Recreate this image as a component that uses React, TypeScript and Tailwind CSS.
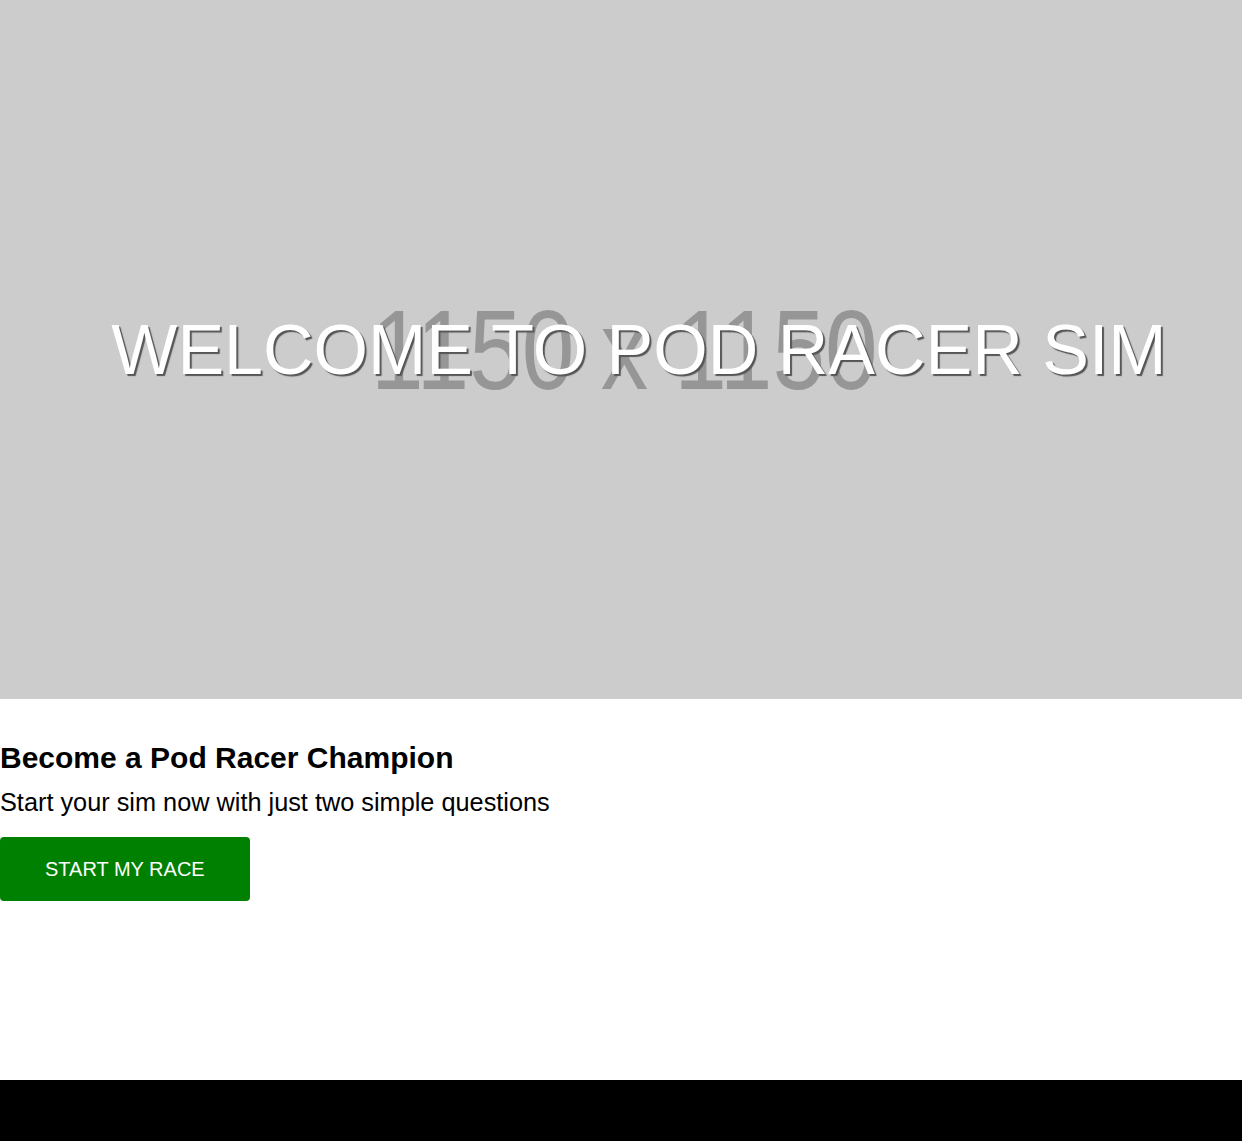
import React from "react";

export default function App() {
  return (
    <div className="w-full bg-white font-['Liberation_Sans',Arial,sans-serif] text-black">
      <section className="relative flex h-[699px] w-full items-center justify-center overflow-hidden bg-[#cccccc]">
        <div className="absolute inset-0 flex items-center justify-center pl-[6px]">
          <span className="scale-x-[0.83] whitespace-nowrap text-[114px] leading-[131px] text-[#969696]">
            1150 x 1150
          </span>
        </div>
        <h1 className="relative whitespace-nowrap pl-[36px] text-center text-[70px] font-normal leading-[80px] text-white [text-shadow:2px_2px_1px_#555]">
          WELCOME TO POD RACER SIM
        </h1>
      </section>
      <section>
        <h2 className="mt-[42px] text-[30px] font-bold leading-[34px]">Become a Pod Racer Champion</h2>
        <p className="mt-[13px] text-[25.3px] leading-[29px]">Start your sim now with just two simple questions</p>
        <button className="mt-[20px] flex h-[64px] items-center rounded-[4px] bg-[#008000] px-[45px] text-[20px] leading-[23px] text-white">
          START MY RACE
        </button>
      </section>
      <footer className="mt-[179px] h-[61px] w-full bg-black" />
    </div>
  );
}
